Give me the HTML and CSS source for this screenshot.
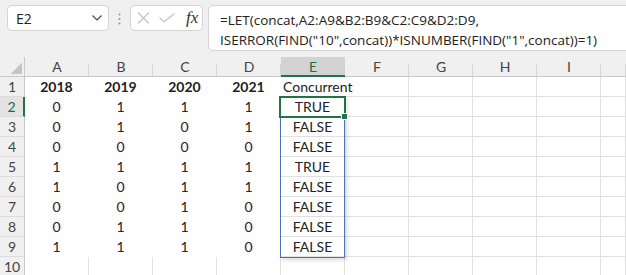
FILE: index.html
```html
<!DOCTYPE html>
<html lang="en">
<head>
    <meta charset="UTF-8">
    <title>Concurrent</title>
    <link rel="stylesheet" href="styles.css">
</head>
<body>
    <!-- Formula bar -->
    <div class="fbar">
        <div class="namebox">
            <span>E2</span>
            <svg width="10" height="6" viewBox="0 0 10 6"><polyline points="0.5,0.5 5,5 9.5,0.5" fill="none" stroke="#444" stroke-width="1.1"/></svg>
        </div>
        <div class="grip">
            <svg width="3" height="12" viewBox="0 0 3 12"><circle cx="1.5" cy="1.5" r="1.1" fill="#9a9a9a"/><circle cx="1.5" cy="6" r="1.1" fill="#9a9a9a"/><circle cx="1.5" cy="10.5" r="1.1" fill="#9a9a9a"/></svg>
        </div>
        <div class="fxbox">
            <svg width="13" height="12" viewBox="0 0 13 12"><path d="M1 0.5 L12 11.5 M12 0.5 L1 11.5" stroke="#c4c4c4" stroke-width="1.2" fill="none"/></svg>
            <svg width="16" height="10" viewBox="0 0 16 10"><polyline points="0.5,4.5 5,9 15.5,0.5" stroke="#c4c4c4" stroke-width="1.2" fill="none"/></svg>
            <i>fx</i>
        </div>
        <div class="formula">=LET(concat,A2:A9&amp;B2:B9&amp;C2:C9&amp;D2:D9,<br>ISERROR(FIND("10",concat))*ISNUMBER(FIND("1",concat))=1)</div>
    </div>

    <!-- Sheet -->
    <div class="sheet">
        <div class="row hdr">
            <div class="corner"></div>
            <div class="ch">A</div><div class="ch">B</div><div class="ch">C</div><div class="ch">D</div>
            <div class="ch active">E</div>
            <div class="ch">F</div><div class="ch">G</div><div class="ch">H</div><div class="ch">I</div>
            <div class="ch"></div>
        </div>
        <div class="row">
            <div class="rh">1</div>
            <div class="c nb b">2018</div><div class="c nb b">2019</div><div class="c nb b">2020</div><div class="c nb b">2021</div>
            <div class="c left">Concurrent</div>
            <div class="c"></div><div class="c"></div><div class="c"></div><div class="c"></div><div class="c"></div>
        </div>
        <div class="row">
            <div class="rh active">2</div>
            <div class="c nb">0</div><div class="c nb">1</div><div class="c nb">1</div><div class="c nb">1</div>
            <div class="c">TRUE</div>
            <div class="c"></div><div class="c"></div><div class="c"></div><div class="c"></div><div class="c"></div>
        </div>
        <div class="row">
            <div class="rh">3</div>
            <div class="c nb">0</div><div class="c nb">1</div><div class="c nb">0</div><div class="c nb">1</div>
            <div class="c">FALSE</div>
            <div class="c"></div><div class="c"></div><div class="c"></div><div class="c"></div><div class="c"></div>
        </div>
        <div class="row">
            <div class="rh">4</div>
            <div class="c nb">0</div><div class="c nb">0</div><div class="c nb">0</div><div class="c nb">0</div>
            <div class="c">FALSE</div>
            <div class="c"></div><div class="c"></div><div class="c"></div><div class="c"></div><div class="c"></div>
        </div>
        <div class="row">
            <div class="rh">5</div>
            <div class="c nb">1</div><div class="c nb">1</div><div class="c nb">1</div><div class="c nb">1</div>
            <div class="c">TRUE</div>
            <div class="c"></div><div class="c"></div><div class="c"></div><div class="c"></div><div class="c"></div>
        </div>
        <div class="row">
            <div class="rh">6</div>
            <div class="c nb">1</div><div class="c nb">0</div><div class="c nb">1</div><div class="c nb">1</div>
            <div class="c">FALSE</div>
            <div class="c"></div><div class="c"></div><div class="c"></div><div class="c"></div><div class="c"></div>
        </div>
        <div class="row">
            <div class="rh">7</div>
            <div class="c nb">0</div><div class="c nb">0</div><div class="c nb">1</div><div class="c nb">0</div>
            <div class="c">FALSE</div>
            <div class="c"></div><div class="c"></div><div class="c"></div><div class="c"></div><div class="c"></div>
        </div>
        <div class="row">
            <div class="rh">8</div>
            <div class="c nb">0</div><div class="c nb">1</div><div class="c nb">1</div><div class="c nb">0</div>
            <div class="c">FALSE</div>
            <div class="c"></div><div class="c"></div><div class="c"></div><div class="c"></div><div class="c"></div>
        </div>
        <div class="row">
            <div class="rh">9</div>
            <div class="c nb">1</div><div class="c nb">1</div><div class="c nb">1</div><div class="c nb">0</div>
            <div class="c">FALSE</div>
            <div class="c"></div><div class="c"></div><div class="c"></div><div class="c"></div><div class="c"></div>
        </div>
        <div class="row">
            <div class="rh">10</div>
            <div class="c"></div><div class="c"></div><div class="c"></div><div class="c"></div><div class="c"></div>
            <div class="c"></div><div class="c"></div><div class="c"></div><div class="c"></div><div class="c"></div>
        </div>

        <!-- spill range + active cell -->
        <div class="spill"></div>
        <div class="sel"><span class="handle"></span></div>
    </div>
</body>
</html>
```

FILE: styles.css
```css
body {
    margin: 0;
    background: #fff;
    font-family: 'Lato', 'Open Sans', sans-serif;
    color: #222;
    overflow: hidden;
}

/* Formula bar */
.fbar {
    display: flex;
    align-items: flex-start;
    height: 57px;
    box-sizing: border-box;
    padding: 5px 0 0 7px;
    background: #f0f0f0;
    font-family: 'Open Sans', sans-serif;
}

.namebox {
    display: flex;
    align-items: center;
    justify-content: space-between;
    width: 102px;
    height: 26px;
    box-sizing: border-box;
    padding: 0 6px 0 8px;
    background: #fff;
    border: 1px solid #d4d4d4;
    border-radius: 5px;
    font-size: 14px;
    color: #222;
}

.grip {
    display: flex;
    justify-content: center;
    width: 21px;
    padding-top: 8px;
}

.fxbox {
    display: flex;
    align-items: center;
    gap: 9px;
    width: 73px;
    height: 26px;
    box-sizing: border-box;
    padding-left: 6px;
    background: #fff;
    border: 1px solid #d4d4d4;
    border-radius: 5px;
}

.fxbox i {
    font-family: 'Liberation Serif', serif;
    font-size: 17px;
    color: #333;
    margin-left: 2px;
}

.formula {
    flex: 1;
    margin: 0 -10px 0 5px;
    height: 46px;
    box-sizing: border-box;
    padding: 4px 0 0 11px;
    background: #fff;
    border: 1px solid #d4d4d4;
    border-radius: 5px;
    font-size: 13.5px;
    line-height: 20px;
    color: #222;
    white-space: nowrap;
}

/* Sheet */
.sheet {
    position: relative;
}

.row {
    display: grid;
    grid-template-columns: 25px repeat(9, 64px) 1fr;
    height: 20px;
}

.hdr .corner,
.hdr .ch {
    background-color: #f0f0f0;
    border-bottom: 1px solid #c9c9c9;
    box-sizing: border-box;
}

.corner {
    border-right: 1px solid #c9c9c9;
    background-image: linear-gradient(to bottom right, transparent 50%, #c6c6c6 50%);
    background-size: 11px 11px;
    background-position: right 2px bottom 2px;
    background-repeat: no-repeat;
}

.ch {
    display: flex;
    justify-content: center;
    align-items: flex-end;
    font-size: 14px;
    line-height: 18px;
    color: #444;
    background-image: linear-gradient(#d6d6d6, #d6d6d6);
    background-size: 1px 12px;
    background-position: right bottom;
    background-repeat: no-repeat;
}

.ch.active {
    background: #d3d3d3;
    color: #1d6b3f;
    border-bottom: 2px solid #217346;
    line-height: 17px;
}

.rh {
    display: flex;
    justify-content: center;
    align-items: flex-end;
    box-sizing: border-box;
    background: #f0f0f0;
    border-right: 1px solid #c9c9c9;
    border-bottom: 1px solid #dcdcdc;
    font-size: 14px;
    line-height: 18px;
    color: #444;
}

.rh.active {
    background: #e3e3e3;
    color: #1d6b3f;
    border-right: 2px solid #217346;
}

.c {
    display: flex;
    justify-content: center;
    align-items: flex-end;
    box-sizing: border-box;
    border-right: 1px solid #e1e1e1;
    border-bottom: 1px solid #e1e1e1;
    font-size: 14px;
    line-height: 18px;
    white-space: nowrap;
}

.c.nb {
    border-color: #fff;
}

.c.b {
    font-weight: bold;
}

.c.left {
    justify-content: flex-start;
    padding-left: 2px;
    border-right-color: #fff;
}

/* Overlays */
.spill {
    position: absolute;
    left: 280px;
    top: 39px;
    width: 65px;
    height: 162px;
    box-sizing: border-box;
    border: 1px solid #4a72be;
    box-shadow: 2px 2px 4px rgba(0, 0, 0, 0.15);
}

.sel {
    position: absolute;
    left: 279px;
    top: 39px;
    width: 67px;
    height: 22px;
    box-sizing: border-box;
    border: 2px solid #217346;
}

.handle {
    position: absolute;
    right: -4px;
    bottom: -4px;
    width: 7px;
    height: 7px;
    box-sizing: border-box;
    background: #217346;
    border: 1px solid #fff;
}
```
